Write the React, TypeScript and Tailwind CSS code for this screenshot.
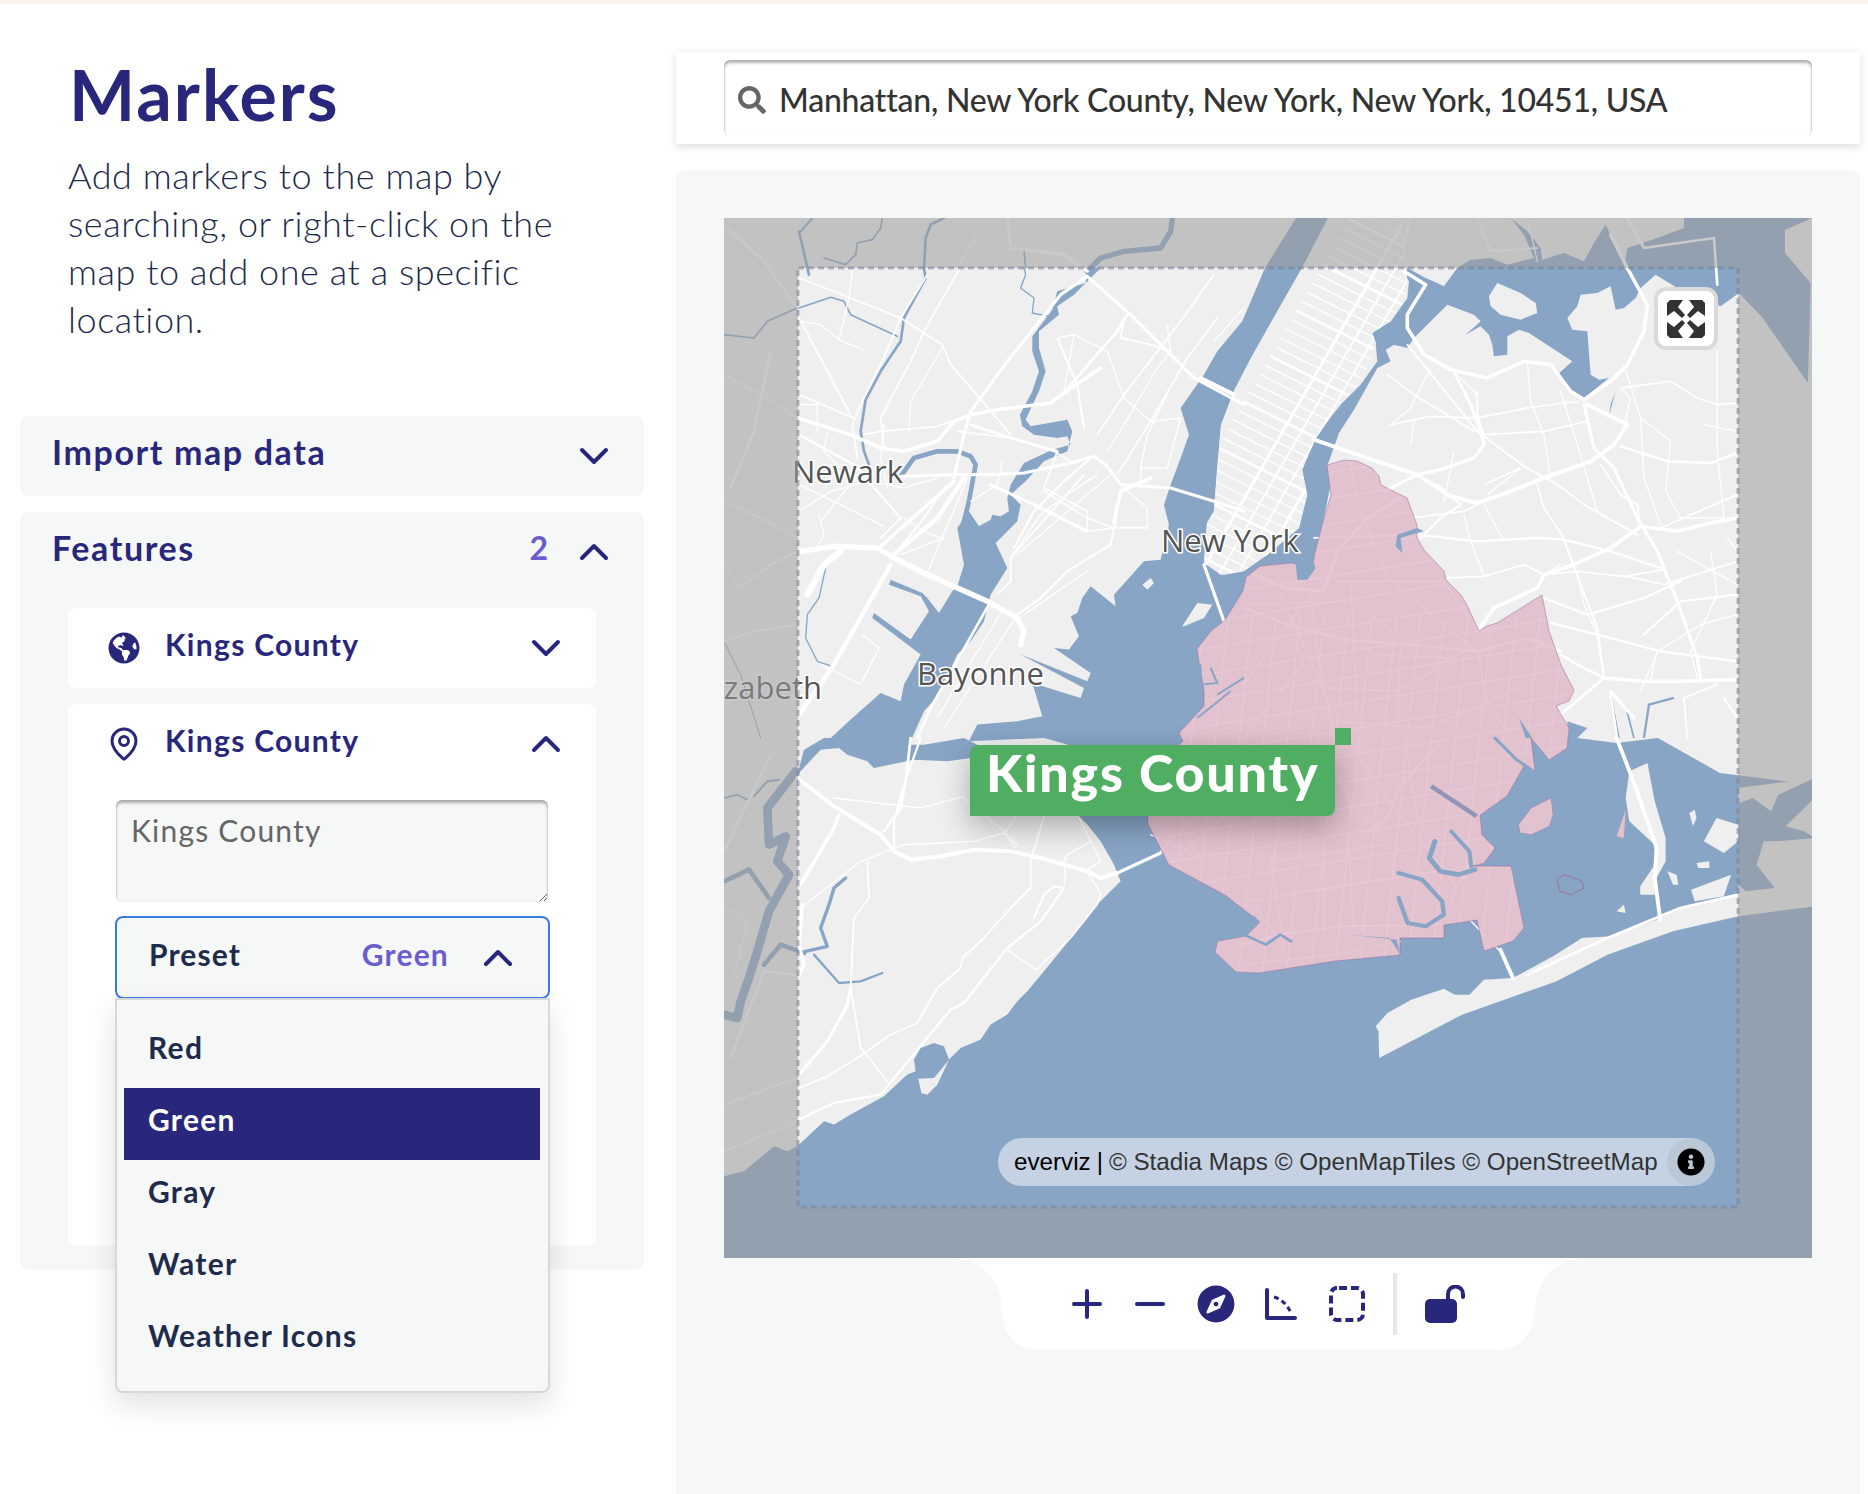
import React from 'react';
import {MapPin} from 'lucide-react';
import {FaCompass, FaGlobeAmericas, FaInfoCircle, FaSearch} from 'react-icons/fa';

const WATER = '#88a5c6';
const LAND = '#efefef';

// points are written in the crop scale: 3 units = 1px of the map
const bayAndOcean = '1716,0 1623,150 1555,310 1480,400 1440,470 1370,570 1395,650 1370,720 1340,800 1320,860 1335,920 1310,1025 1260,1030 1170,1130 1175,1165 1100,1105 1075,1140 1060,1185 1040,1195 1065,1255 1035,1295 990,1290 1100,1365 1090,1390 890,1310 1080,1410 1070,1440 925,1395 955,1495 880,1510 760,1520 735,1570 960,1560 1030,1580 1060,1790 1090,1820 1130,1870 1170,1940 1190,1990 1120,2060 1050,2150 960,2260 910,2320 880,2350 850,2390 800,2420 770,2465 710,2490 675,2525 660,2485 630,2475 590,2490 570,2525 575,2560 550,2570 480,2635 380,2690 330,2720 300,2710 220,2785 190,2800 150,2785 60,2860 0,2875 0,3130 3270,3130 3270,1700 2988,1665 2802,1560 2678,1575 2560,1560 2200,1400 1770,1060 1630,1010 1560,1060 1500,1070 1440,1035 1449,915 1470,879 1479,759 1491,621 1530,519 1581,420 1734,150 1812,0';

const newarkBay = '1085,195 1000,220 985,275 925,355 925,400 945,460 925,520 888,590 895,625 930,650 1000,660 1030,655 1040,680 985,695 900,735 860,800 850,840 855,880 830,895 805,890 800,905 765,925 735,880 700,930 720,1040 700,1105 685,1120 645,1185 610,1140 595,1125 500,1085 495,1100 590,1135 615,1180 560,1265 450,1185 445,1200 590,1310 540,1400 530,1450 470,1425 385,1500 310,1570 560,1570 600,1480 645,1430 700,1310 740,1270 780,1210 800,1130 850,1050 815,975 880,910 890,860 860,830 905,790 960,730 1030,700 1045,640 1030,605 920,625 905,605 945,520 965,460 945,390 945,340 1005,290 1000,265 1050,230 1130,150 1090,150';

const eastRiver = '490,150 480,165 495,190 490,240 440,310 385,345 395,375 400,430 350,500 290,560 210,660 175,755 190,830 165,930 70,1010 0,1060 0,1150 200,1100 260,800 250,740 255,730 285,645 330,575 400,450 440,430 425,395 450,380 490,390 510,360 610,260 690,290 710,310 665,350 710,325 735,350 745,380 750,415 790,410 790,355 825,335 855,345 985,430 940,470 965,510 1020,540 1095,480 1065,485 1040,470 1030,340 985,335 970,300 1000,265 1010,230 1060,225 1100,205 1115,275 1140,270 1175,240 1190,210 1235,170 1300,210 1430,265 1485,225 1554,297 1692,495 1700,195 1623,105 1623,36 1704,0 1320,0 1320,30 1240,60 1150,90 1145,125 1100,50 1085,20 1050,75 1020,130 960,105 895,125 890,90 850,40 800,0 840,50 870,120 790,140 740,120 680,125 640,150 600,205 580,195 545,180';

const killVanKull = '220,110 240,35 300,0 550,0 560,20 600,20 720,0 760,20 740,60 670,70 570,65 450,90 430,70 370,50 345,30 290,35';

const rockaway = '372,960 370,880 362,865 395,825 460,785 550,752 580,770 620,770 660,725 740,720 850,655 930,600 1010,595 1135,545 1200,510 1360,470 1570,460 1570,505 1360,535 1180,580 1000,650 860,730 600,830';

const brooklyn = '620,242 633,243 648,250 655,258 657,267 677,277 683,280 693,307 693,320 700,332 720,353 722,362 737,377 743,387 755,413 763,408 773,405 818,377 825,413 837,447 850,472 845,483 832,488 845,510 843,530 825,542 807,520 811,553 800,548 783,578 756,597 758,617 771,630 760,645 749,648 787,648 800,710 789,723 760,733 753,702 720,707 720,720 676,720 676,737 611,743 535,755 512,754 491,734 494,723 522,718 536,704 501,677 445,647 424,606 422,560 459,523 455,515 480,488 480,473 473,431 487,413 501,402 519,373 522,359 536,348 568,345 578,348 589,345 592,331 600,300 607,277 603,247';

const manhattan = '606,0 578,50 527,140 510,173 497,207 493,253 490,293 483,305 480,345 497,357 520,353 543,337 575,310 583,277 578,252 592,220 613,190 637,163 652,125 648,115 667,103 683,80 683,55 677,0';

type Road = [number, string];

const roadsNw: Road[] = [
    [12, '230,1000 330,985 460,990 510,1020 600,1065 790,1150 880,1200 900,1240 890,1280'],
    [8, '220,600 380,650 470,690 540,700 640,670 690,610 740,590 820,575 980,555 1020,525 1130,450'],
    [7, '530,775 690,770 800,770 900,765 1040,735 1110,715 1150,745 1190,800 1340,810 1470,850 1560,880'],
    [7, '690,780 720,650 740,580 850,430 1010,230 1090,175 1230,300 1410,480 1560,560'],
    [4, '225,180 380,240 530,300 655,380 680,440 750,520 860,650'],
    [4, '705,155 600,340 560,430 470,600 480,690'],
    [4, '610,170 530,300 470,440 410,560 385,620 400,720'],
    [3, '555,640 560,550 655,390'],
    [3, '385,155 375,240 345,365 415,395'],
    [3, '230,310 290,320 345,365'],
    [4, '225,300 385,600'],
    [4, '225,530 390,600'],
    [5, '225,650 390,740 530,900 470,960'],
    [3, '225,800 330,850 480,925'],
    [3, '290,910 410,760'],
    [14, '250,1130 300,1040 350,1000'],
    [10, '500,1040 330,1340 225,1490'],
    [8, '470,985 600,870 690,790'],
    [10, '510,1010 640,900 720,780'],
    [3, '610,1065 730,780'],
    [4, '960,820 1090,900 1170,930 1270,930'],
    [7, '800,800 930,860 1090,940'],
    [6, '740,620 860,660 1000,700'],
    [3, '860,1020 950,890 1030,830 1120,770'],
    [3, '880,1010 1160,770'],
    [8, '1170,910 1190,820 1280,780'],
    [5, '1000,360 1060,500 1080,630'],
    [3, '1000,360 1050,350 1150,400 1200,540 1280,610 1370,600 1330,750 1250,750 1250,790'],
    [4, '1120,650 1200,530 1370,310 1470,170'],
    [6, '1020,525 1110,420 1180,340 1210,290'],
    [4, '1080,770 860,1020 860,1090 820,1130'],
    [5, '1180,880 1160,980 1030,1060 950,1140 880,1190'],
    [3, '1090,1060 900,1190'],
    [6, '800,1150 620,1470 580,1560'],
    [3, '840,1170 640,1500'],
    [3, '880,1190 660,1530'],
    [3, '415,1250 465,1290 410,1400 290,1340'],
    [7, '1440,1040 1500,1210'],
    [9, '1430,480 1530,530'],
    [3, '220,960 110,900 0,850'],
    [3, '0,470 130,540 220,600'],
    [6, '140,400 90,640 20,810'],
    [3, '0,1040 50,1110 140,1040 220,1000'],
    [4, '0,20 120,130 220,270'],
    [7, '850,0 860,90 1020,110 1090,160'],
    [3, '770,30 700,150'],
    [4, '0,1270 90,1240 220,1220'],
    [3, '225,560 280,560 280,640'],
    [3, '310,640 300,700 380,780'],
    [4, '420,650 470,640 640,625 680,610'],
    [3, '480,620 470,720 490,810'],
    [3, '835,730 820,800 740,850'],
    [4, '700,640 860,660 990,700 1040,730'],
    [3, '440,790 540,810 640,780'],
    [3, '540,900 600,940 660,965'],
    [5, '660,810 600,900 520,1000'],
    [3, '285,890 300,950 275,1000'],
    [3, '225,880 320,820 430,790'],
    [4, '1200,300 1190,360 1280,380 1340,400'],
    [3, '1330,320 1340,400 1300,450 1200,620 1150,700'],
    [4, '1480,300 1390,420 1280,610 1180,770'],
    [3, '1560,270 1470,370'],
    [5, '1100,720 1020,790 930,880 870,990'],
    [4, '1000,700 960,810 1090,880'],
    [3, '1090,880 1090,940 1170,930'],
    [3, '1200,810 1270,870 1270,930'],
    [3, '1050,350 1020,520'],
    [3, '1330,530 1270,650 1250,750'],
    [3, '530,1010 660,960'],
];

const roadsNe: Road[] = [
    [8, '480,160 545,200 490,290 490,330 540,410 620,455 730,480 840,430 920,440 980,520 1020,545 1100,490 1150,440 1200,340 1210,260 1150,150 1100,50'],
    [7, '1020,560 1050,690 1110,750 1180,900 1240,1000 1300,1150 1360,1320 1370,1380'],
    [7, '630,460 680,560 710,640 720,680 690,720 590,755 520,770 420,820'],
    [9, '210,665 400,730 520,770 620,835 700,855 800,820 900,780 1040,730 1110,680 1150,620 1030,560'],
    [6, '1480,705 1400,735 1270,730 1130,685'],
    [4, '1480,555 1420,560 1360,540 1280,490 1130,510'],
    [8, '1480,900 1400,915 1300,940 1190,925 1100,990 990,1040 900,1070 880,1110 750,1170 700,1240'],
    [8, '1080,1380 1200,1390 1300,1390 1480,1385'],
    [5, '1480,1330 1250,1300 1060,1250 920,1215'],
    [6, '1080,1380 950,1490'],
    [6, '1080,1380 1000,1340 950,1310'],
    [5, '520,950 700,970 880,960 960,965 1100,1000 1250,1050'],
    [4, '610,1080 720,1075 840,1040 900,1070 1000,1060 1140,1075 1260,1055'],
    [5, '960,965 1010,1100 1060,1230 1080,1380'],
    [4, '880,800 900,870 960,960'],
    [4, '500,900 660,880 720,850'],
    [3, '720,860 780,970'],
    [3, '660,890 680,970 720,1075'],
    [4, '440,620 560,595 700,600 850,570 1000,550'],
    [4, '490,380 700,640 840,745 940,800 1020,860 1180,950'],
    [4, '720,650 900,640 1030,610'],
    [3, '850,430 860,550 900,650 920,780'],
    [3, '950,520 1000,680 1060,880'],
    [3, '1140,440 1190,600 1200,780 1250,920'],
    [3, '1190,600 1280,670 1265,820 1310,900'],
    [3, '1420,400 1420,700 1440,900'],
    [4, '1480,830 1250,930'],
    [5, '1480,1130 1310,1150 1200,1250'],
    [4, '1480,1030 1260,1100 1150,1075'],
    [5, '900,1140 1030,1190 1200,1140 1310,1090'],
    [3, '1240,1300 1220,1385'],
    [4, '1420,1400 1320,1440 1330,1560'],
    [5, '1480,1500 1440,1440'],
    [8, '1170,1500 1100,1420'],
    [5, '1100,1430 1120,1560'],
    [3, '1300,1000 1480,1100'],
    [6, '1150,0 1200,90 1410,60 1420,200'],
    [4, '700,0 740,100 880,90'],
    [3, '500,0 480,80'],
    [3, '850,0 880,130'],
    [3, '560,450 500,570 440,620'],
    [4, '430,470 510,530 690,640'],
    [3, '510,610 500,680'],
    [3, '630,700 600,850'],
    [4, '700,520 700,590 720,650'],
    [3, '650,480 700,530'],
    [5, '580,800 650,860 590,900 530,960'],
    [3, '720,800 830,750 780,790 730,830'],
    [3, '1130,510 1160,540 1140,630'],
    [4, '1070,740 1130,830 1180,860 1190,930'],
    [3, '1480,640 1380,620'],
    [3, '1310,900 1440,900'],
    [3, '880,1110 900,1070 950,1040'],
    [3, '1000,1060 1020,1160 1060,1250 1070,1330'],
    [3, '1190,1420 1240,1300 1370,1220 1480,1190'],
    [3, '1360,1380 1340,1300 1420,1130 1400,1000'],
    [3, '1450,960 1480,1000'],
    // under the county fill
    [7, '30,1070 120,1110 240,1120 280,1000 370,900 470,840'],
    [4, '280,1090 600,1090'],
    [6, '0,1170 130,1220 300,1265 500,1280 700,1300 850,1260 950,1300'],
    [4, '210,960 500,950'],
    [3, '320,730 340,850 430,1080 600,1220 700,1300'],
    [3, '110,1130 250,1440 270,1560'],
    [3, '200,1120 220,1300 270,1560'],
    [3, '320,1090 340,1500'],
    [3, '470,1280 460,1560'],
    [3, '0,1400 130,1220 210,1120'],
    [3, '700,1300 730,1450 800,1560'],
    [3, '280,1510 540,1530 700,1470 880,1380'],
    [3, '460,1420 550,1370 620,1320'],
    [3, '250,1410 460,1420'],
    [3, '0,1160 330,1150 480,1270'],
    [3, '60,1090 60,1170'],
    [3, '600,1090 700,1240'],
    [3, '380,1310 620,1320 680,1290'],
    [3, '130,1220 180,1330 0,1560'],
];

const roadsSw: Road[] = [
    [9, '220,120 330,205 470,290 510,340 560,365 650,355 750,335 860,340 950,360 1020,380 1090,400 1130,420 1180,405'],
    [7, '1180,405 1310,345'],
    [8, '235,500 225,620 240,680 225,710'],
    [8, '230,440 330,270 345,230'],
    [6, '560,0 545,130 530,210 480,280'],
    [5, '590,0 540,140 510,250 510,340'],
    [3, '230,510 410,370 540,320 650,315 750,310 840,285 880,320'],
    [4, '430,370 435,480 390,540 380,750 410,930 490,1030'],
    [7, '225,1010 310,910 370,800 380,750'],
    [4, '225,1050 310,1015 400,960 500,890 580,855 640,750 710,690 715,660 780,600 860,510 920,450 920,370 970,200'],
    [5, '225,1145 330,1095 470,1070 560,960 680,815 720,795 850,630 950,550 1020,450 990,445 960,470 930,540'],
    [3, '850,635 935,695 1040,600 1120,500 1130,465 1095,410'],
    [3, '330,180 590,210 720,175'],
    [3, '1020,375 1025,415 1020,440'],
    [3, '1100,310 1030,350 1015,380'],
    [3, '1060,230 1130,370 1090,395'],
    [3, '720,180 840,280 875,330'],
    [3, '880,230 840,290'],
    [3, '0,1240 220,1150'],
    [4, '0,1100 220,1020'],
    [5, '20,960 120,700 220,710'],
    [3, '0,500 70,560 30,710'],
    [5, '0,340 140,50'],
    // under the county fill
    [3, '1310,340 1390,260 1460,210 1560,120'],
    [3, '1380,340 1560,180'],
    [3, '1440,380 1390,300 1480,230'],
    [3, '1280,290 1400,340 1560,350'],
    [3, '1500,240 1560,300'],
];

const roadsSe: Road[] = [
    [5, '0,620 100,590 260,565 540,560'],
    [3, '75,370 390,320'],
    [3, '100,470 400,420'],
    [3, '0,460 75,570 110,640'],
    [4, '340,290 400,230 425,150 550,0'],
    [3, '200,0 300,200 590,510 700,635'],
    [3, '280,0 400,190 580,440'],
    [3, '150,130 75,370 110,640'],
    [3, '220,370 220,600'],
    [3, '290,330 300,560'],
    [3, '440,0 480,250'],
    [3, '630,370 580,450 560,540'],
    [3, '0,680 250,650 430,610'],
    [3, '190,100 40,240 0,300'],
    [8, '705,635 740,720'],
    [8, '1025,0 1075,140 1135,330 1130,420 1145,545'],
    [6, '1360,470 1200,510 1000,600 860,670 780,710'],
];

const Polylines = ({roads, transform}: {roads: Road[], transform: string}) => (
    <g transform={transform} fill="none" stroke="#fff" strokeLinecap="round" strokeLinejoin="round">
        {roads.map((road, i) => <polyline key={i} points={road[1]} strokeWidth={road[0] * 1.35}/>)}
    </g>
)

// street grids, clipped to the islands
const avenues = Array.from({length: 16}, (_, i) => i)
const streets = Array.from({length: 56}, (_, i) => i)
const kingsRows = Array.from({length: 18}, (_, i) => i)

const MapDrawing = () => (
    <svg viewBox="0 0 1088 1040" className="block w-[1088px] h-[1040px]">
        <defs>
            <clipPath id="island"><polygon points={manhattan}/></clipPath>
            <clipPath id="county"><polygon points={brooklyn}/></clipPath>
        </defs>
        <rect width="1088" height="1040" fill={LAND}/>

        <g transform="scale(0.3333)" fill={WATER}>
            <polygon points={bayAndOcean}/>
            <polygon points={newarkBay}/>
            <g fill="none" stroke={WATER} strokeLinejoin="round" strokeLinecap="round">
                <polyline points="225,270 320,238 360,250 380,290 520,355" strokeWidth="5"/>
                <polyline points="600,150 605,180 540,300 530,370 470,460 425,545 410,640 420,700 435,740" strokeWidth="8"/>
                <polyline points="530,775 570,720 640,700 700,700 740,715 755,740 735,850 715,930" strokeWidth="14"/>
                <polyline points="900,150 905,170 890,210 930,240 925,285 975,295" strokeWidth="4"/>
                <polyline points="305,1050 285,1140 250,1190 245,1260 280,1330 325,1345" strokeWidth="4"/>
                <polyline points="330,1340 420,1175" strokeWidth="3"/>
                <polyline points="225,40 255,170" strokeWidth="8"/>
                <polyline points="0,350 90,360 130,310 220,270" strokeWidth="5"/>
                <polyline points="230,40 265,0" strokeWidth="6"/>
                <polyline points="300,120 365,140 395,110 400,75 445,65 470,30 475,0" strokeWidth="5"/>
                <polyline points="600,150 605,60 620,20 660,0" strokeWidth="8"/>
                <polyline points="1090,160 1130,120 1200,100 1310,90 1340,40 1345,0" strokeWidth="16"/>
                <polyline points="900,95 905,150" strokeWidth="5"/>
                <polyline points="0,1270 50,1370 110,1560" strokeWidth="3"/>
            </g>
        </g>

        <g transform="translate(520 0) scale(0.3333)" fill={WATER}>
            <polygon points={eastRiver}/>
            <polyline points="450,0 450,70 480,140" fill="none" stroke={WATER} strokeWidth="7"/>
            <polyline points="1100,1430 1125,1560" fill="none" stroke={WATER} strokeWidth="5"/>
            <polyline points="1145,1465 1170,1560" fill="none" stroke={WATER} strokeWidth="5"/>
            <polyline points="1200,1560 1215,1460 1290,1440" fill="none" stroke={WATER} strokeWidth="7"/>
            <polygon points="970,1510 1030,1530 1000,1560 975,1560"/>
            <polygon points="1115,520 1095,595 1100,560"/>
            <polygon fill={LAND} points="735,235 760,195 830,225 875,255 880,285 830,305 770,290 740,265"/>
        </g>

        <g transform="translate(0 520) scale(0.3333)" fill={WATER}>
            <polygon points={killVanKull}/>
            <g fill="none" stroke={WATER} strokeLinejoin="round" strokeLinecap="round">
                <polyline points="215,100 130,210 135,320 185,295 160,370 195,410 135,520 100,640 75,720 50,790 40,840 0,830" strokeWidth="26"/>
                <polyline points="0,430 75,395 135,480" strokeWidth="14"/>
                <polyline points="120,680 170,620 240,645" strokeWidth="14"/>
                <polyline points="0,180 40,170 70,185" strokeWidth="5"/>
                <polyline points="90,175 130,130 165,125" strokeWidth="6"/>
                <polyline points="245,640 310,625 290,570 315,500 330,450 365,420" strokeWidth="10"/>
                <polyline points="270,650 345,735 410,730 475,705" strokeWidth="7"/>
            </g>
            <polygon fill={LAND} points="583,1022 630,1020 675,965 640,1040 610,1070 592,1065"/>
        </g>

        <g transform="translate(520 520) scale(0.3635 0.3333)" fill={LAND}>
            <polygon points="1360,150 1570,120 1570,480 1360,480"/>
            <polygon fill={WATER} points="1350,200 1400,180 1450,220 1470,170 1570,120 1570,180 1490,265 1540,280 1570,300 1470,310 1430,310 1410,380 1460,450 1380,460 1360,440 1350,420"/>
            <polygon points={rockaway}/>
            <polygon points="1110,75 1130,190 1160,300 1160,370 1130,430 1130,470 1090,470 1090,445 1130,380 1130,320 1060,250 1050,180 1060,100"/>
            <polygon points="1225,225 1240,215 1245,240 1235,265"/>
            <polygon points="1265,310 1300,240 1360,260 1360,310 1320,345"/>
            <polygon points="1245,375 1280,370 1280,390 1250,390"/>
            <polygon points="1165,400 1190,410 1195,440 1180,440"/>
            <polygon points="1025,520 1045,500 1050,525"/>
            <polygon points="1230,455 1340,410 1320,475 1240,490"/>
        </g>

        <g transform="scale(0.3333)" fill={LAND}>
            <polygon points="1375,1225 1420,1155 1465,1160 1440,1200 1380,1225"/>
            <polygon points="1255,1100 1280,1080 1290,1095 1270,1115"/>
        </g>
        <polygon points={manhattan} fill={LAND}/>
        <polygon points={brooklyn} fill={LAND}/>

        <Polylines roads={roadsNw} transform="scale(0.3333)"/>
        <Polylines roads={roadsNe} transform="translate(520 0) scale(0.3333)"/>
        <Polylines roads={roadsSw} transform="translate(0 520) scale(0.3333)"/>
        <Polylines roads={roadsSe} transform="translate(520 520) scale(0.3635 0.3333)"/>

        <g clipPath="url(#island)" stroke="#fff" fill="none">
            {avenues.map(i => (
                <line key={i} x1={480 + i * 14} y1={350 + i * 8} x2={480 + i * 14 + 240} y2={350 + i * 8 - 416} strokeWidth={i % 3 === 0 ? 3 : 1.8}/>
            ))}
            {streets.map(i => (
                <line key={i} x1={440 + i * 5.3} y1={320 - i * 9.1} x2={740 + i * 5.3} y2={470 - i * 9.1} strokeWidth={i % 5 === 0 ? 2.6 : 1.3}/>
            ))}
        </g>
        <g clipPath="url(#county)" stroke="#fff" fill="none" strokeWidth="1.4">
            {kingsRows.map(i => (
                <line key={i} x1={440 + i * 24} y1={780} x2={480 + i * 24} y2={400}/>
            ))}
            {kingsRows.map(i => (
                <line key={i} x1={420} y1={700 - i * 26} x2={860} y2={630 - i * 26}/>
            ))}
        </g>

        <polygon points={brooklyn} fill="rgba(216,164,184,0.6)" stroke="rgba(140,90,150,0.45)" strokeWidth="1"/>

        <g transform="translate(520 520) scale(0.3635 0.3333)">
            <polygon fill="#e1c3cf" stroke="rgba(140,90,150,0.45)" strokeWidth="2" points="755,260 790,210 845,180 850,230 840,265 790,290 760,285"/>
            <polygon fill="none" stroke="rgba(170,100,140,0.7)" strokeWidth="3" points="860,425 880,410 930,430 935,450 900,470 870,460"/>
            <polygon fill="#e1c3cf" points="1050,215 1025,295 1045,300"/>
            <g fill="none" stroke={WATER} strokeLinejoin="round" strokeLinecap="round">
                <polyline points="425,405 490,425 545,490 550,530 500,565 450,555 425,480" strokeWidth="12"/>
                <polyline points="525,310 510,360 540,400 590,410 635,395" strokeWidth="14"/>
                <polyline points="570,280 620,340 625,385" strokeWidth="11"/>
                <polyline points="690,0 750,65 790,95" strokeWidth="9"/>
                <polyline points="800,20 830,60" strokeWidth="10"/>
                <polyline points="0,530 30,540 0,560" strokeWidth="8"/>
                <polyline points="0,590 60,620 100,590 130,610" strokeWidth="8"/>
            </g>
            <polyline points="515,145 640,235" fill="none" stroke="#9094b8" strokeWidth="13"/>
            <polygon fill={WATER} points="290,590 420,605 430,650 400,600"/>
        </g>

        <g transform="translate(520 0) scale(0.3333)" fill={WATER}>
            <polygon points="460,950 520,930 540,940 500,950 470,960 475,1005 455,985"/>
            <polygon points="155,1040 200,1005 215,1050 190,1085 160,1085"/>
            <polygon points="825,1500 865,1560 845,1560"/>
        </g>
        <g transform="scale(0.3333)" fill="none" stroke={WATER} strokeWidth="6">
            <polyline points="1430,1340 1430,1400 1480,1395 1460,1350"/>
            <polyline points="1480,1430 1560,1380"/>
            <polyline points="1420,1500 1520,1420"/>
        </g>

        <g className="[font-family:'Open_Sans',sans-serif] [paint-order:stroke]" fontSize="31" fill="#555" stroke="#fff" strokeWidth="3">
            <text x="68" y="265">Newark</text>
            <text x="437" y="334">New York</text>
            <text x="193" y="467">Bayonne</text>
            <text x="98" y="481" textAnchor="end">zabeth</text>
        </g>

        <path fill="rgba(157,157,157,0.55)" fillRule="evenodd" d="M0 0H1088V1040H0ZM74 50V989H1014V50Z"/>
        <rect x="74" y="50" width="940" height="939" fill="none" stroke="rgba(120,130,150,0.55)" strokeWidth="3" strokeDasharray="6 4"/>
    </svg>
)

const Chevron = ({up}: {up?: boolean}) => (
    <svg width="30" height="18" viewBox="0 0 30 18" fill="none" stroke="#29277b" strokeWidth="4" strokeLinecap="round" strokeLinejoin="round">
        <polyline points={up ? '3,15 15,3 27,15' : '3,3 15,15 27,3'}/>
    </svg>
)

const ToolButton = ({children, className}: {children: React.ReactNode, className?: string}) => (
    <button type="button" className={'flex w-[65px] h-[60px] items-center justify-center text-[#29277b] ' + (className || '')}>
        {children}
    </button>
)

export default function App() {
    const options = ['Red', 'Green', 'Gray', 'Water', 'Weather Icons']

    return (
        <div className="relative w-[1868px] h-[1494px] overflow-hidden bg-white [font-family:Lato,sans-serif]">
            <div className="h-[4px] bg-[#faf5ee]"/>
            <div className="flex">
                <div className="w-[676px] shrink-0">
                    <h1 className="ml-[69px] mt-[50px] text-[70px] leading-[80px] font-bold tracking-[2px] text-[#29277b]">Markers</h1>
                    <p className="ml-[68px] mt-[17px] w-[530px] text-[36px] leading-[48px] font-light tracking-[0.55px] text-[#1e2b4b]">
                        Add markers to the map by searching, or right-click on the map to add one at a specific location.
                    </p>

                    <div className="ml-[20px] mt-[73px] flex h-[80px] w-[624px] items-center justify-between rounded-lg bg-[#f6f8f7] pl-[32px] pr-[35px]">
                        <span className="mb-[10px] text-[34px] font-bold tracking-[1.6px] text-[#29277b]">Import map data</span>
                        <Chevron/>
                    </div>

                    <div className="ml-[20px] mt-[16px] h-[758px] w-[624px] rounded-lg bg-[#f6f8f7]">
                        <div className="flex h-[80px] items-center justify-between pl-[32px] pr-[35px]">
                            <span className="mb-[10px] text-[34px] font-bold tracking-[1.6px] text-[#29277b]">Features</span>
                            <div className="flex items-center gap-[31px]">
                                <span className="mb-[8px] text-[32px] font-bold text-[#6c5ccf]">2</span>
                                <Chevron up/>
                            </div>
                        </div>

                        <div className="ml-[48px] mt-[16px] flex h-[80px] w-[528px] items-center rounded-lg bg-white pl-[40px] pr-[35px]">
                            <FaGlobeAmericas size={32} className="text-[#29277b]"/>
                            <span className="mb-[7px] ml-[25px] flex-1 text-[30px] font-bold tracking-[1.3px] text-[#29277b]">Kings County</span>
                            <Chevron/>
                        </div>

                        <div className="ml-[48px] mt-[16px] h-[542px] w-[528px] rounded-lg bg-white">
                            <div className="flex h-[80px] items-center pl-[38px] pr-[35px]">
                                <MapPin size={36} strokeWidth={2} className="text-[#29277b]"/>
                                <span className="mb-[7px] ml-[23px] flex-1 text-[30px] font-bold tracking-[1.3px] text-[#29277b]">Kings County</span>
                                <Chevron up/>
                            </div>
                            <textarea
                                readOnly
                                defaultValue="Kings County"
                                className="ml-[48px] mt-[16px] block h-[102px] w-[432px] rounded-md bg-[#f6f8f7] px-[15px] pb-[10px] pt-[12px] text-[30px] leading-[36px] tracking-[1.2px] text-[#666] shadow-[inset_0_3px_3px_rgba(0,0,0,0.3),inset_0_0_2px_rgba(0,0,0,0.1)] outline-none"
                            />
                            <div className="relative ml-[47px] mt-[14px] w-[435px]">
                                <div className="flex h-[83px] items-center rounded-lg border-2 border-[#3b7be0] bg-[#f6f8f7] pl-[32px] pr-[35px]">
                                    <span className="mb-[7px] flex-1 text-[30px] font-bold tracking-[1.1px] text-[#1e2b4b]">Preset</span>
                                    <span className="mb-[7px] mr-[34px] text-[30px] font-bold tracking-[1.2px] text-[#6c5ccf]">Green</span>
                                    <Chevron up/>
                                </div>
                                <div className="absolute left-0 top-[82px] z-10 h-[395px] w-full rounded-b-lg border-2 border-[#d8d8d8] bg-[#f6f8f7] pl-[7px] pr-[8px] pt-[16px] shadow-[0_12px_30px_rgba(0,0,0,0.12)]">
                                    {options.map(option => (
                                        <div
                                            key={option}
                                            className={option === 'Green'
                                                ? 'flex h-[72px] items-center bg-[#29277b] pb-[9px] pl-[24px] text-[30px] font-bold tracking-[1.3px] text-white'
                                                : 'flex h-[72px] items-center pb-[9px] pl-[24px] text-[30px] font-bold tracking-[1.3px] text-[#1e2b4b]'}
                                        >
                                            {option}
                                        </div>
                                    ))}
                                </div>
                            </div>
                        </div>
                    </div>
                </div>

                <div className="w-[1184px] shrink-0">
                    <div className="mt-[48px] h-[92px] bg-white pl-[48px] pr-[48px] pt-[8px] shadow-[0_2px_8px_rgba(0,0,0,0.15)]">
                        <div className="flex h-[76px] items-center rounded-md pl-[14px] pt-[3px] shadow-[inset_0_3px_3px_rgba(0,0,0,0.3),inset_1px_0_1px_rgba(0,0,0,0.06),inset_-1px_0_1px_rgba(0,0,0,0.06)]">
                            <FaSearch size={28} className="text-[#666]"/>
                            <span className="ml-[13px] text-[32px] font-medium tracking-[-0.23px] text-[#333]">Manhattan, New York County, New York, New York, 10451, USA</span>
                        </div>
                    </div>

                    <div className="mt-[26px] h-[1324px] rounded-t-lg bg-[#f6f8f7] pl-[48px] pt-[48px]">
                        <div className="relative h-[1040px] w-[1088px] overflow-hidden">
                            <MapDrawing/>

                            <button type="button" className="absolute left-[930px] top-[69px] flex h-[63px] w-[64px] items-center justify-center rounded-xl border-[4px] border-[rgba(150,150,150,0.35)] bg-white">
                                <svg width="38" height="38" viewBox="0 0 38 38" fill="#333">
                                    <polygon points="3,0 16,0 11,7 18,15 15,18 7,11 0,16 0,3"/>
                                    <polygon points="35,0 22,0 27,7 20,15 23,18 31,11 38,16 38,3"/>
                                    <polygon points="3,38 16,38 11,31 18,23 15,20 7,27 0,22 0,35"/>
                                    <polygon points="35,38 22,38 27,31 20,23 23,20 31,27 38,22 38,35"/>
                                </svg>
                            </button>

                            <div className="absolute left-[246px] top-[527px] z-10 flex h-[71px] w-[365px] items-center rounded-tl-lg rounded-br-lg bg-[#4fae62] pb-[18px] pl-[16px] text-[52px] font-black tracking-[1.8px] text-white shadow-[0_10px_30px_rgba(0,0,0,0.3)]">
                                Kings County
                            </div>
                            <div className="absolute left-[611px] top-[510px] z-10 h-[17px] w-[16px] bg-[#4fae62]"/>

                            <div className="absolute left-[274px] top-[920px] flex h-[48px] w-[717px] items-center rounded-full bg-[rgba(255,255,255,0.5)] pl-[16px] [font-family:'Liberation_Sans',sans-serif] text-[24.2px] text-[#333]">
                                <span className="text-black">everviz</span>
                                <span className="ml-[6px] mr-[6px] text-black">|</span>
                                <span>© Stadia Maps © OpenMapTiles © OpenStreetMap</span>
                                <span className="absolute right-0 top-0 flex h-[48px] w-[48px] items-center justify-center rounded-full bg-[rgba(0,0,0,0.05)]">
                                    <FaInfoCircle size={28} className="text-black"/>
                                </span>
                            </div>
                        </div>

                        <div className="relative ml-[225px] flex h-[92px] w-[639px] items-center pl-[105px]">
                            <svg className="absolute left-0 top-0" width="639" height="92" viewBox="0 0 639 92">
                                <path fill="#fff" d="M0 0C36 0 53 26 53 55C55 78 68 92 88 92H548C572 92 585 76 586 50C588 24 604 0 639 0Z"/>
                            </svg>
                            <ToolButton>
                                <svg width="30" height="30" viewBox="0 0 30 30" stroke="currentColor" strokeWidth="4" strokeLinecap="round" className="relative"><path d="M15 2V28M2 15H28"/></svg>
                            </ToolButton>
                            <ToolButton className="-ml-[2px]">
                                <svg width="30" height="30" viewBox="0 0 30 30" stroke="currentColor" strokeWidth="4" strokeLinecap="round" className="relative"><path d="M2 15H28"/></svg>
                            </ToolButton>
                            <ToolButton className="ml-[1px]"><FaCompass size={38} className="relative"/></ToolButton>
                            <ToolButton>
                                <svg width="32" height="32" viewBox="0 0 32 32" fill="none" stroke="currentColor" strokeWidth="4" strokeLinecap="round" strokeLinejoin="round" className="relative">
                                    <path d="M2 2V30H30"/>
                                    <path d="M9 9C17 11 23 18 26 25" strokeWidth="3" strokeDasharray="5 3.5" strokeLinecap="butt"/>
                                </svg>
                            </ToolButton>
                            <ToolButton className="ml-[1px]">
                                <svg width="36" height="36" viewBox="0 0 36 36" fill="none" stroke="currentColor" strokeWidth="4" className="relative">
                                    <rect x="2" y="2" width="32" height="32" rx="6" strokeDasharray="8 4" strokeDashoffset="-2"/>
                                </svg>
                            </ToolButton>
                            <div className="relative ml-[14px] h-[62px] w-[4px] bg-[#e5e7eb]"/>
                            <ToolButton className="relative ml-[16px]">
                                <svg width="42" height="38" viewBox="0 0 42 38" className="relative" fill="currentColor">
                                    <rect x="0" y="14" width="32" height="24" rx="5"/>
                                    <path d="M23 15V9a7.5 7.5 0 0 1 15 0v3" fill="none" stroke="currentColor" strokeWidth="4" strokeLinecap="round"/>
                                </svg>
                            </ToolButton>
                        </div>
                    </div>
                </div>
            </div>
        </div>
    )
}
